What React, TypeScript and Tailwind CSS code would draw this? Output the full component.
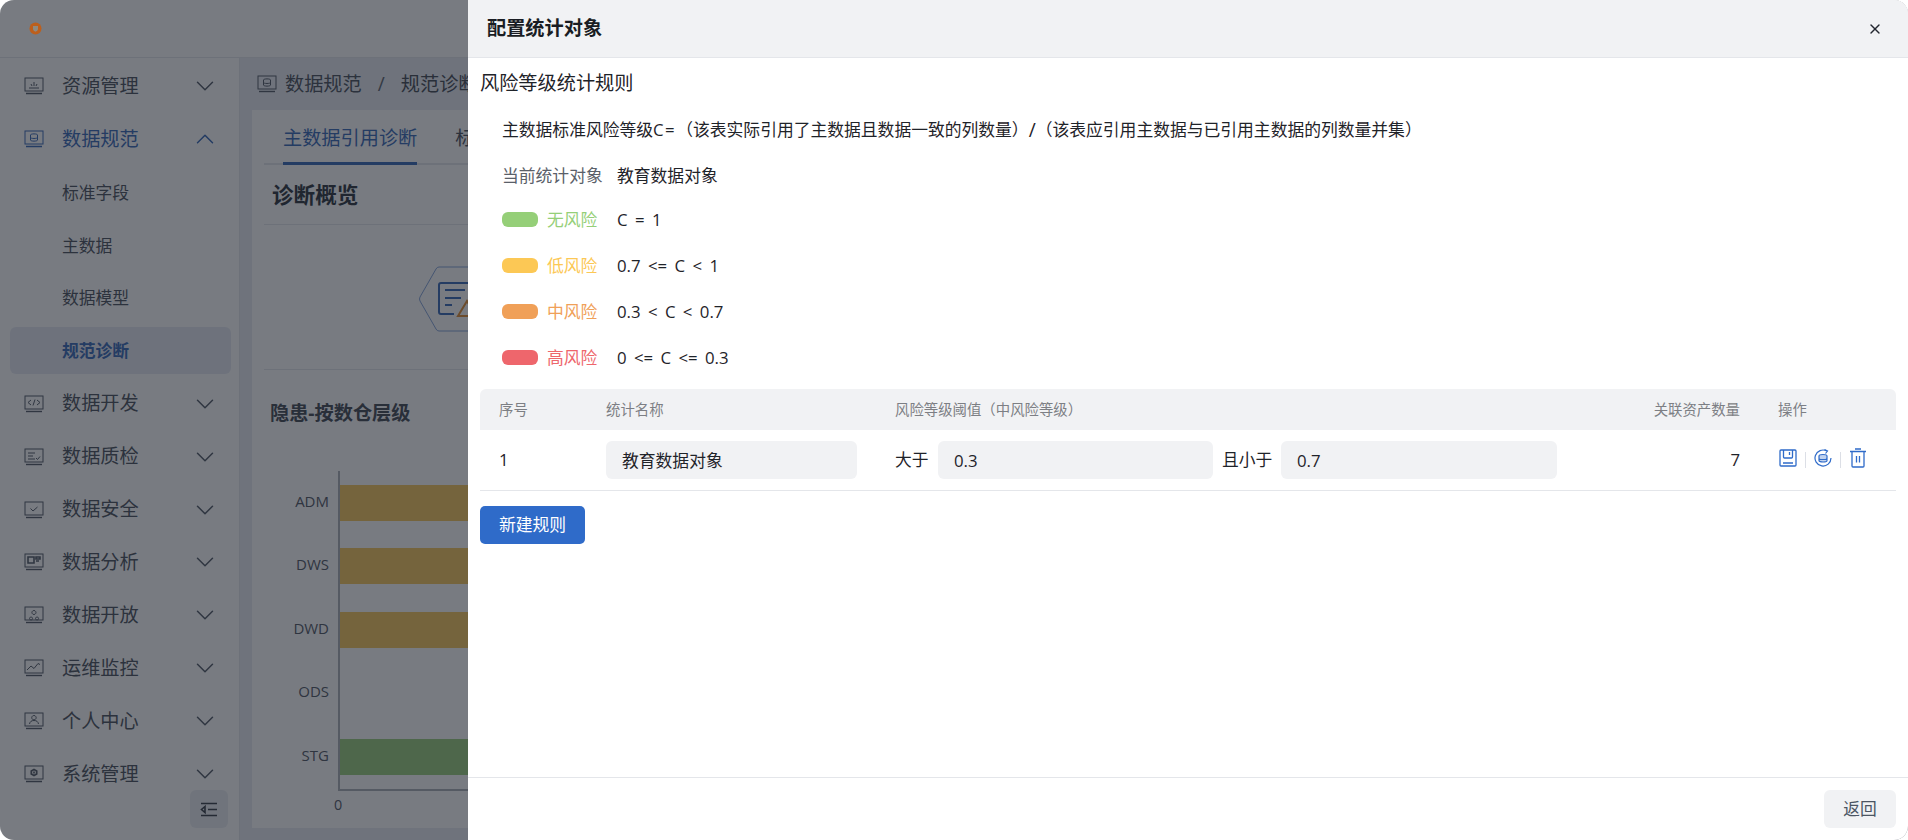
import { ChevronDown, ChevronUp, X } from 'lucide-react';
import type { ReactNode } from 'react';

const FONT = "font-['Open_Sans','Noto_Sans_CJK_SC',sans-serif]";

// Sidebar glyphs sit inside a small monitor outline
function NavIcon({ children, color = '#4b5360' }: { children?: ReactNode; color?: string }) {
  return (
    <svg width="20" height="18" viewBox="0 0 20 18" fill="none" stroke={color} strokeWidth="1">
      <rect x="1" y="1" width="18" height="13" />
      <path d="M2 16.5h16" strokeWidth="1.4" />
      {children}
    </svg>
  );
}

const navIcons: Record<string, ReactNode> = {
  资源管理: <path d="M5 11h10M10 5v4M7 7l1 2M13 7l-1 2" />,
  数据规范: <path d="M6.5 5c0-1.5 7-1.5 7 0v5c0 1.500-7 1.500-7 0zM6.500 7.500c0 1.300 7 1.300 7 0" />,
  数据开发: <path d="M7 5L4 7.500 7 10M13 5l3 2.500-3 2.500M11 4.500L9 10.500" />,
  数据质检: <path d="M4 5h7M4 8h5M4 11h7M12 10l1.500 1.500L16 8.500" />,
  数据安全: <path d="M6.500 7.500l2.500 2.500 4.500-4" />,
  数据分析: <path d="M4 4h6v6H4zM12 4h4v2h-4zM12 8h3" strokeWidth="1.600" />,
  数据开放: <path d="M10 4.500a2 2 0 1 1-.1 0zM7 11a1.500 1.500 0 1 0 .1 0zM13 11a1.500 1.500 0 1 0 .1 0z" />,
  运维监控: <path d="M3 11l4-4 3 2.500 4-5 2 1" />,
  个人中心: <path d="M10 3.500a2.200 2.200 0 1 1-.1 0zM5.500 12c.5-2.500 2-3.500 4.500-3.500s4 1 4.500 3.500" />,
  系统管理: <path d="M10 4.500l2.700 1.500v3L10 10.500 7.300 9V6zM10 6.500v2" strokeWidth="1.700" />,
};

function NavItem({ label, open = false }: { label: string; open?: boolean }) {
  return (
    <div className="flex h-[52.9px] items-center pl-[24px] pr-[19px]">
      <NavIcon color={open ? '#2f62b4' : '#4b5360'}>{navIcons[label]}</NavIcon>
      <span className={`ml-[18px] flex-1 text-[19.2px] ${open ? 'text-[#2f62b4]' : 'text-[#434a55]'}`}>{label}</span>
      {open ? (
        <ChevronUp size={30} strokeWidth={1.2} className="text-[#2f62b4]" />
      ) : (
        <ChevronDown size={30} strokeWidth={1.2} className="text-[#4b5360]" />
      )}
    </div>
  );
}

function SubItem({ label, active = false }: { label: string; active?: boolean }) {
  if (active) {
    return (
      <div className="my-[3px] ml-[10px] mr-[8px] flex h-[46.9px] items-center rounded-[6px] bg-[#e6e9f3] pl-[52px] text-[16.8px] font-bold text-[#2f62b4]">
        {label}
      </div>
    );
  }
  return <div className="flex h-[52.9px] items-center pl-[62px] text-[16.8px] text-[#434a55]">{label}</div>;
}

function Sidebar() {
  return (
    <aside className="flex w-[240px] shrink-0 flex-col border-r border-[#e4e6ea] bg-white pt-[2px]">
      <NavItem label="资源管理" />
      <NavItem label="数据规范" open />
      <SubItem label="标准字段" />
      <SubItem label="主数据" />
      <SubItem label="数据模型" />
      <SubItem label="规范诊断" active />
      <NavItem label="数据开发" />
      <NavItem label="数据质检" />
      <NavItem label="数据安全" />
      <NavItem label="数据分析" />
      <NavItem label="数据开放" />
      <NavItem label="运维监控" />
      <NavItem label="个人中心" />
      <NavItem label="系统管理" />
    </aside>
  );
}

const bars = [
  { label: 'ADM', color: 'bg-[#f7c555]' },
  { label: 'DWS', color: 'bg-[#f7c555]' },
  { label: 'DWD', color: 'bg-[#f7c555]' },
  { label: 'ODS', color: '' },
  { label: 'STG', color: 'bg-[#96cd78]' },
];

function Background() {
  return (
    <div className="flex h-full flex-col bg-white text-[#3a414d]">
      <header className="flex h-[58px] shrink-0 items-center border-b border-[#e4e6ea] pl-[29px]">
        <svg width="13" height="13" viewBox="0 0 13 13" className="relative z-20">
          <circle cx="6.500" cy="6.500" r="6" fill="#bd5f1c" />
          <path d="M4 4h5v3c0 1.500-1.500 2.300-2.500 2.700C5.500 9.300 4 8.500 4 7z" fill="#8f8a80" />
        </svg>
      </header>
      <div className="flex min-h-0 flex-1">
        <Sidebar />
        <main className="flex min-w-0 flex-1 flex-col bg-[#e8ebf2]">
          <div className="flex h-[52px] shrink-0 items-center pl-[17px] text-[19.2px]">
            <NavIcon>{navIcons['数据规范']}</NavIcon>
            <span className="ml-[8px] text-[#434a55]">数据规范</span>
            <span className="mx-[16px] text-[#555c68]">/</span>
            <span>规范诊断</span>
          </div>
          <div className="mx-[12px] mb-[12px] flex-1 bg-white px-[12px]">
            <div className="flex h-[55px] gap-[38px] border-b-2 border-[#e4e6ea] pl-[19px] pt-[4px] text-[19.2px]">
              <span className="-mb-[2px] flex items-center border-b-[3px] border-[#2f62b4] text-[#2f62b4]">主数据引用诊断</span>
              <span className="flex items-center text-[#434a55]">标准字段诊断</span>
            </div>
            <div className="flex h-[60px] items-center border-b border-[#e4e6ea] pl-[8px] pt-[2px] text-[21.6px] font-bold text-[#252b35]">诊断概览</div>
            <div className="flex h-[145px] items-center border-b border-[#e4e6ea] pl-[154px] pt-[3px]">
              <svg width="90" height="66" viewBox="0 0 90 66" fill="none">
                <path d="M21 1h68v64H21q-2 0-3-2L2 35q-1-2 0-4L18 3q1-2 3-2z" stroke="#7fa0d8" />
                <path d="M36 48H23q-2 0-2-2V19q0-2 2-2h30v16" stroke="#2f62b4" strokeWidth="2" />
                <path d="M27 24h20M27 32h16M27 39h7" stroke="#2f62b4" strokeWidth="2" />
                <path d="M40 50l9-15 9 15z" stroke="#e08a2c" strokeWidth="2" />
              </svg>
            </div>
            <div className="pt-[30px] pl-[6px] text-[19.2px] font-bold leading-[26px] text-[#3a414d]">隐患-按数仓层级</div>
            <div className="mt-[45px] flex">
              <div className="-mt-[2px] w-[74px] shrink-0 pr-[9px] text-right text-[15px] text-[#4a505c]">
                {bars.map((b) => (
                  <div key={b.label} className="flex h-[63.5px] items-center justify-end">{b.label}</div>
                ))}
              </div>
              <div>
                <div className="w-[400px] border-b-2 border-l-2 border-[#a8acb3]">
                  {bars.map((b) => (
                    <div key={b.label} className="flex h-[63.5px] items-center">
                      <div className={`h-[36px] w-[380px] ${b.color}`} />
                    </div>
                  ))}
                </div>
                <div className="-ml-[4px] mt-[3px] text-[14.4px] text-[#4a505c]">0</div>
              </div>
            </div>
          </div>
        </main>
      </div>
      <button className="absolute bottom-[12px] left-[190px] flex h-[38px] w-[38px] items-center justify-center rounded-[6px] bg-[#eceef3]">
        <svg width="18" height="15" viewBox="0 0 18 15" fill="none" stroke="#2f3540" strokeWidth="1.600">
          <path d="M1 1.500h16M8 7.500h9M1 13.500h16M5 4.500L1.500 7.500 5 10.500z" />
        </svg>
      </button>
    </div>
  );
}

const levels = [
  { name: '无风险', pill: 'bg-[#95cf78]', text: 'text-[#95cf78]', rule: 'C = 1' },
  { name: '低风险', pill: 'bg-[#fcc855]', text: 'text-[#fcc855]', rule: '0.7 <= C < 1' },
  { name: '中风险', pill: 'bg-[#f0a058]', text: 'text-[#f0a058]', rule: '0.3 < C < 0.7' },
  { name: '高风险', pill: 'bg-[#ee666c]', text: 'text-[#ee666c]', rule: '0 <= C <= 0.3' },
];

function SaveIcon() {
  return (
    <svg width="18" height="18" viewBox="0 0 18 18" fill="none" stroke="#2f6bc9" strokeWidth="1.300" className="mb-[4px]">
      <path d="M1 2q0-1 1-1h14q1 0 1 1v14q0 1-1 1H2q-1 0-1-1zM4.500 1v7q0 1 1 1h7q1 0 1-1V1M10.500 3v3M4 14h10" />
    </svg>
  );
}

function ResetIcon() {
  return (
    <svg width="18" height="18" viewBox="0 0 18 18" fill="none" stroke="#2f6bc9" strokeWidth="1.200" className="mb-[4px]">
      <path d="M12.800 2A8 8 0 1 0 17 9" />
      <path d="M10.500 0.500l3 1.500-2 2.500" />
      <path d="M5 7c0-2 8-2 8 0v4.500c0 2-8 2-8 0zM5 9.200c0 1.600 8 1.600 8 0" fill="#2f6bc9" fillOpacity="0.300" />
    </svg>
  );
}

function TrashIcon() {
  return (
    <svg width="18" height="20" viewBox="0 0 18 20" fill="none" stroke="#2f6bc9" strokeWidth="1.300" className="mb-[5px]">
      <path d="M1 3.500h16M6 1h6M3 3.500V18q0 1 1 1h10q1 0 1-1V3.500M7.500 8v6.500M10.500 8v6.500" />
    </svg>
  );
}

function FieldBox({ value, className }: { value: string; className: string }) {
  return (
    <input
      readOnly
      value={value}
      className={`h-[38px] rounded-[6px] bg-[#f1f2f4] pl-[16px] text-[16.8px] text-[#1f2329] outline-none ${className}`}
    />
  );
}

function Drawer() {
  return (
    <section className="absolute inset-y-0 right-0 z-30 flex w-[1440px] flex-col bg-white text-[#1f2329]">
      <header className="flex h-[58px] shrink-0 items-center justify-between border-b border-[#e4e6ea] bg-[#f1f2f4] pl-[19px] pr-[25px]">
        <h1 className="text-[19.2px] font-bold text-[#1a1d23]">配置统计对象</h1>
        <X size={16} strokeWidth={2} className="text-[#23272f]" />
      </header>

      <div className="flex-1 pl-[12px] pr-[12px]">
        <h2 className="flex h-[50px] items-center text-[19.2px]">风险等级统计规则</h2>
        <div className="pl-[22px]">
          <div className="flex h-[44px] items-center text-[16.8px]">
            <span>主数据标准风险等级</span>
            <span className="tracking-[1.5px]">C=</span>
            <span>（该表实际引用了主数据且数据一致的列数量）</span>
            <span className="text-[19.2px] font-medium">/</span>
            <span>（该表应引用主数据与已引用主数据的列数量并集）</span>
          </div>
          <div className="flex h-[45px] items-center pt-[2px] text-[16.8px]">
            <span className="w-[115px] text-[#5a6069]">当前统计对象</span>
            <span>教育数据对象</span>
          </div>
          {levels.map((l) => (
            <div key={l.name} className="flex h-[45.75px] items-center text-[16.8px]">
              <span className={`h-[15px] w-[36px] rounded-[6px] ${l.pill}`} />
              <span className={`ml-[9px] w-[70px] ${l.text}`}>{l.name}</span>
              <span className="whitespace-pre [word-spacing:3px]">{l.rule}</span>
            </div>
          ))}
        </div>

        <div className="mt-[9px]">
          <div className="grid h-[41px] grid-cols-[126px_289px_725px_120px_156px] items-center rounded-t-[6px] bg-[#f1f2f4] text-[14.4px] text-[#7d7f84]">
            <span className="pl-[19px]">序号</span>
            <span>统计名称</span>
            <span>风险等级阈值（中风险等级）</span>
            <span className="text-right">关联资产数量</span>
            <span className="pl-[38px]">操作</span>
          </div>
          <div className="grid h-[61px] grid-cols-[126px_289px_725px_120px_156px] items-center border-b border-[#e4e6ea] text-[16.8px]">
            <span className="pl-[19px]">1</span>
            <FieldBox value="教育数据对象" className="w-[251px]" />
            <div className="flex items-center">
              <span className="w-[43px]">大于</span>
              <FieldBox value="0.3" className="w-[275px]" />
              <span className="ml-[9px] w-[59px]">且小于</span>
              <FieldBox value="0.7" className="w-[276px]" />
            </div>
            <span className="text-right">7</span>
            <div className="flex items-center pl-[39px]">
              <SaveIcon />
              <span className="mx-[8px] h-[16px] w-px bg-[#dcdfe6]" />
              <ResetIcon />
              <span className="mx-[8px] h-[16px] w-px bg-[#dcdfe6]" />
              <TrashIcon />
            </div>
          </div>
          <button className="mt-[15px] h-[38px] w-[105px] rounded-[5px] bg-[#2f6bc9] text-[16.8px] text-white">新建规则</button>
        </div>
      </div>

      <footer className="flex h-[63px] shrink-0 items-start justify-end border-t border-[#e4e6ea] pr-[12px] pt-[12px]">
        <button className="h-[38px] w-[72px] rounded-[6px] bg-[#f1f2f4] text-[16.8px] text-[#4b5563]">返回</button>
      </footer>
    </section>
  );
}

export default function App() {
  return (
    <div className={`relative h-[840px] w-[1908px] overflow-hidden rounded-[14px] ${FONT}`}>
      <Background />
      {/* Mask under the drawer */}
      <div className="absolute inset-0 z-10 bg-[rgba(30,35,45,0.6)]" />
      <Drawer />
    </div>
  );
}
